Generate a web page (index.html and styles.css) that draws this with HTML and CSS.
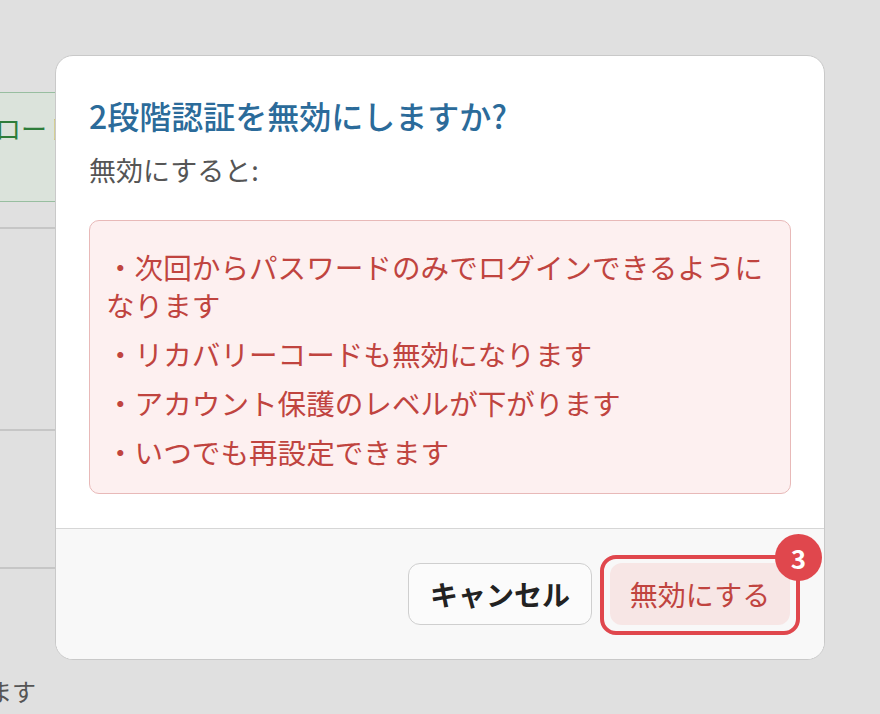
FILE: index.html
```html
<!DOCTYPE html>
<html lang="ja">
<head>
    <meta charset="UTF-8">
    <title>2段階認証の無効化</title>
    <link rel="stylesheet" href="styles.css">
</head>
<body>
    <div class="page">
        <div class="settings">
            <div class="code-box">ダウンロード</div>
            <div class="row row-first"></div>
            <div class="row row-second"></div>
            <div class="row row-third"></div>
            <p class="note">されます</p>
        </div>
    </div>

    <div class="modal">
        <div class="modal-body">
            <h2 class="modal-title">2段階認証を無効にしますか?</h2>
            <p class="modal-lead">無効にすると:</p>
            <div class="warning">
                <ul>
                    <li>・次回からパスワードのみでログインできるようになります</li>
                    <li>・リカバリーコードも無効になります</li>
                    <li>・アカウント保護のレベルが下がります</li>
                    <li>・いつでも再設定できます</li>
                </ul>
            </div>
        </div>
        <div class="modal-footer">
            <button class="btn btn-cancel">キャンセル</button>
            <div class="focus-wrap">
                <button class="btn btn-danger">無効にする</button>
                <span class="focus-ring"></span>
                <span class="badge">3</span>
            </div>
        </div>
    </div>
</body>
</html>
```

FILE: styles.css
```css
body {
    margin: 0;
    width: 880px;
    height: 714px;
    overflow: hidden;
    position: relative;
    background-color: #e0e0e0;
    font-family: "Noto Sans CJK JP", "Noto Sans", sans-serif;
}

/* page behind the dialog */
.page {
    margin-left: -300px;
    width: 400px;
    padding-top: 92px;
}

.code-box {
    height: 110px;
    box-sizing: border-box;
    padding: 17px 0 0 216px;
    background-color: #dbe3db;
    border: 1px solid #98bea0;
    font-size: 26px;
    line-height: 36px;
    color: #2e7d3a;
    white-space: nowrap;
}

.row {
    border-bottom: 2px solid #c6c6c6;
}

.row-first {
    height: 25px;
}

.row-second {
    height: 200px;
}

.row-third {
    height: 136px;
}

.note {
    margin: 106px 0 0 240px;
    font-size: 24px;
    line-height: 32px;
    color: #555;
    white-space: nowrap;
}

/* dialog */
.modal {
    position: absolute;
    left: 55px;
    top: 55px;
    width: 770px;
    box-sizing: border-box;
    background-color: #fff;
    border: 1px solid #c9c9c9;
    border-radius: 18px;
}

.modal-body {
    padding: 39px 33px 34px;
}

.modal-title {
    margin: 0;
    font-size: 32px;
    line-height: 41px;
    font-weight: 500;
    color: #2b6b9a;
}

.modal-lead {
    margin: 14px 0 0;
    font-size: 27px;
    line-height: 39px;
    color: #555;
}

.warning {
    margin-top: 31px;
    background-color: #fdf0f0;
    border: 1.5px solid #e8b9b8;
    border-radius: 10px;
    padding: 27px 16px 22px;
}

.warning ul {
    list-style: none;
    margin: 0;
    padding: 0;
}

.warning li {
    font-size: 28.6px;
    line-height: 38px;
    color: #c0443f;
}

.warning li + li {
    margin-top: 11px;
}

.modal-footer {
    display: flex;
    justify-content: flex-end;
    gap: 18px;
    padding: 34px 34px 34px;
    background-color: #f8f8f8;
    border-top: 1px solid #d6d6d6;
    border-radius: 0 0 17px 17px;
}

.btn {
    height: 62px;
    box-sizing: border-box;
    padding: 0;
    border-radius: 12px;
    font-family: inherit;
    font-size: 28px;
    cursor: pointer;
}

.btn-cancel {
    width: 184px;
    background-color: #fbfbfb;
    border: 1.5px solid #cfcfcf;
    color: #222;
    font-weight: 700;
}

.btn-danger {
    display: block;
    width: 180px;
    background-color: #f7e6e5;
    border: none;
    color: #c0443f;
}

.focus-wrap {
    position: relative;
}

.focus-ring {
    position: absolute;
    top: -8px;
    left: -10px;
    right: -10px;
    bottom: -10px;
    border: 4.5px solid #e0474d;
    border-radius: 16px;
    pointer-events: none;
}

.badge {
    position: absolute;
    top: -29px;
    right: -32px;
    width: 47px;
    height: 47px;
    border-radius: 50%;
    background-color: #e0474d;
    color: #fff;
    font-size: 26px;
    font-weight: 700;
    display: flex;
    justify-content: center;
    align-items: center;
}
```
